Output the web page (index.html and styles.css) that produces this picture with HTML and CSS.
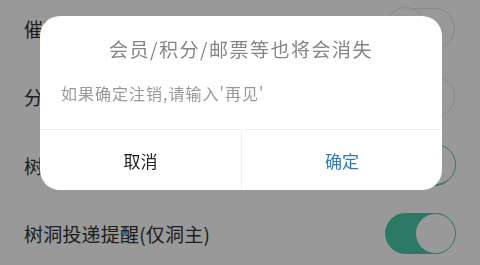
FILE: index.html
```html
<!DOCTYPE html>
<html lang="zh-CN">
<head>
    <meta charset="UTF-8">
    <meta name="viewport" content="width=device-width, initial-scale=1.0">
    <title>设置 - 注销账号</title>
    <link rel="stylesheet" href="styles.css">
</head>
<body>
    <div class="settings">
        <div class="setting-row">
            <span class="setting-label">催更提醒</span>
            <span class="switch"><span class="knob"></span></span>
        </div>
        <div class="setting-row">
            <span class="setting-label">分区</span>
            <span class="switch"><span class="knob"></span></span>
        </div>
        <div class="setting-row">
            <span class="setting-label">树洞</span>
            <span class="switch on"><span class="knob"></span></span>
        </div>
        <div class="setting-row">
            <span class="setting-label">树洞投递提醒(仅洞主)</span>
            <span class="switch on"><span class="knob"></span></span>
        </div>
    </div>

    <div class="mask">
        <div class="dialog">
            <div class="dialog-title">会员/积分/邮票等也将会消失</div>
            <div class="dialog-msg">如果确定注销,请输入'再见'</div>
            <div class="dialog-actions">
                <button class="dialog-btn">取消</button>
                <button class="dialog-btn primary">确定</button>
            </div>
        </div>
    </div>
</body>
</html>
```

FILE: styles.css
```css
body { margin: 0; background: #fff; font-family: "Noto Sans CJK SC", "Noto Sans", sans-serif; overflow: hidden; }

/* settings list behind the dialog */
.settings { margin-top: -6px; }
.setting-row {
    height: 68.5px; display: flex; align-items: center; justify-content: space-between;
    padding: 0 25px 0 24px;
}
.setting-label { font-size: 19px; color: #333; letter-spacing: 0.2px; }
.switch {
    width: 70px; height: 41px; box-sizing: border-box; border: 1.5px solid #e4e4e4;
    border-radius: 21px; background: #fff; display: flex; justify-content: flex-start;
}
.switch .knob {
    width: 41px; height: 41px; margin: -1.5px; box-sizing: border-box;
    border: 1.5px solid #e4e4e4; border-radius: 50%; background: #fff;
}
.switch.on { background: #48c9a8; border-color: #48c9a8; justify-content: flex-end; }
.switch.on .knob { border-color: #48c9a8; }

/* modal */
.mask {
    position: fixed; inset: 0; background: rgba(0, 0, 0, 0.4);
    display: flex; justify-content: center; align-items: flex-start; padding-top: 16px;
}
.dialog { width: 402px; margin-left: 2px; background: #fff; border-radius: 20px; overflow: hidden; }
.dialog-title {
    padding: 21px 20px 0; text-align: center; font-size: 19px; line-height: 24px;
    color: #858585; letter-spacing: 1.5px;
}
.dialog-msg {
    margin-top: 21px; padding: 0 21px 25px; font-size: 16px; line-height: 22px;
    color: #999; letter-spacing: 1px;
}
.dialog-actions { display: grid; grid-template-columns: 1fr 1fr; border-top: 1px solid #f0f0f0; }
.dialog-btn {
    height: 60px; border: none; background: none; font-family: inherit;
    font-size: 17px; color: #1e1e1e; padding: 0;
}
.dialog-btn + .dialog-btn { border-left: 1px solid #f0f0f0; }
.dialog-btn.primary { color: #3079bc; }
```
